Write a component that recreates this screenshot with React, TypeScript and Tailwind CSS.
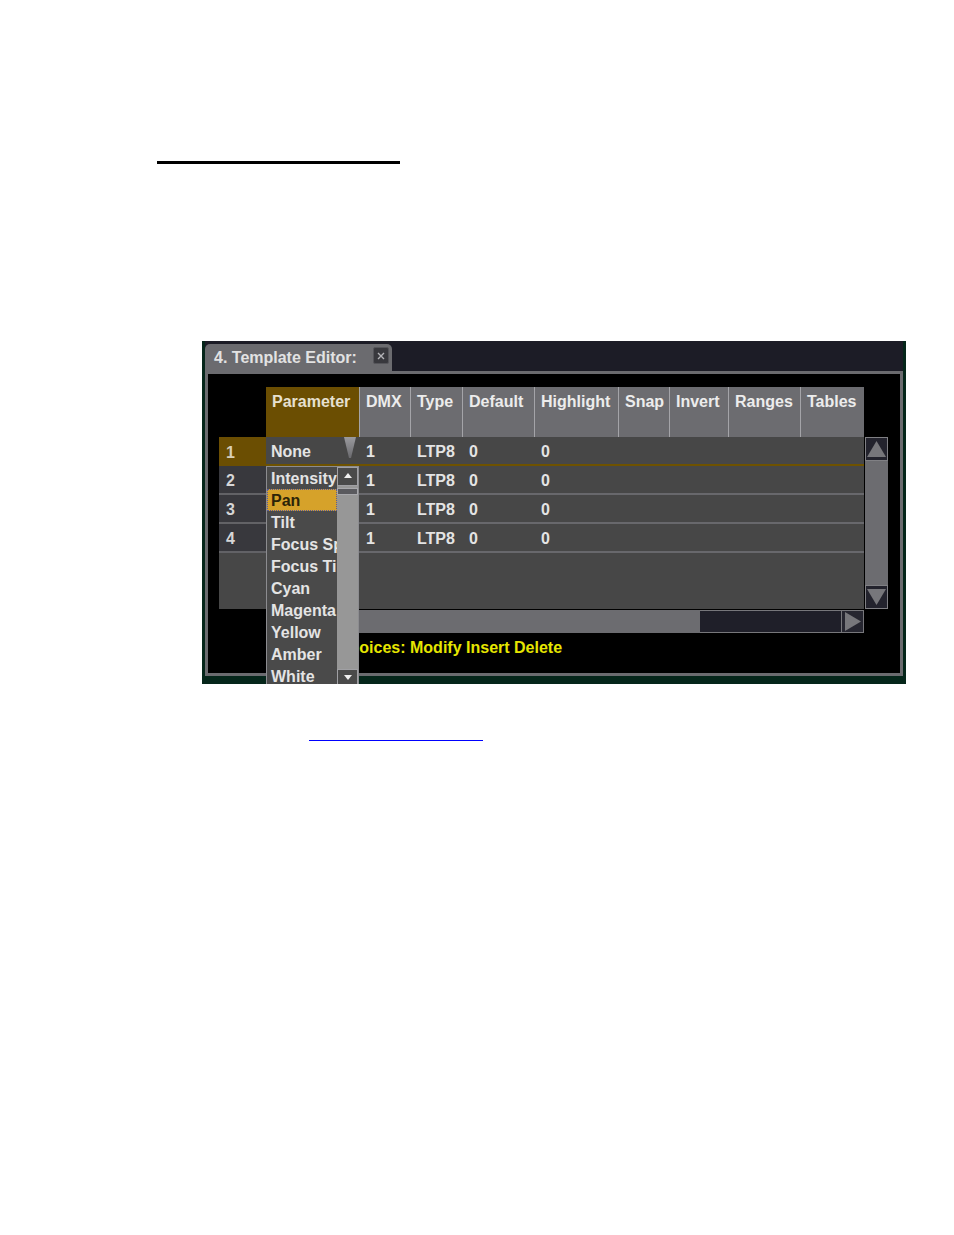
import React from "react";

const headers: { label: string; w: string; brown?: boolean }[] = [
  { label: "Parameter", w: "w-[93px]", brown: true },
  { label: "DMX", w: "w-[51px]" },
  { label: "Type", w: "w-[52px]" },
  { label: "Default", w: "w-[72px]" },
  { label: "Highlight", w: "w-[84px]" },
  { label: "Snap", w: "w-[51px]" },
  { label: "Invert", w: "w-[59px]" },
  { label: "Ranges", w: "w-[72px]" },
  { label: "Tables", w: "w-[64px]" },
];

const items = [
  "Intensity",
  "Pan",
  "Tilt",
  "Focus Speed",
  "Focus Time",
  "Cyan",
  "Magenta",
  "Yellow",
  "Amber",
  "White",
];

function Row({ n, first }: { n: number; first?: boolean }) {
  return (
    <div className="flex h-[29px]">
      <div
        className={
          first
            ? "w-[47px] h-[29px] bg-[#6b4e02] pl-[7px] pt-[1px] flex items-center text-[#d8cfb8]"
            : "w-[47px] h-[29px] bg-[#38383d] border-b-2 border-[#626266] pl-[7px] pt-[1px] flex items-center text-[#d6d6d6]"
        }
      >
        {n}
      </div>
      <div
        className={
          first
            ? "flex-1 h-[29px] flex border-b-2 border-[#6e5200] text-[#e4e4e4]"
            : "flex-1 h-[29px] flex border-b-2 border-[#68686c] text-[#e4e4e4]"
        }
      >
        <div className="w-[93px] pl-[5px] pt-[1px] flex items-center relative">
          {first ? "None" : ""}
          {first && (
            <svg className="absolute left-[78px] top-0" width="12" height="22" viewBox="0 0 12 22">
              <defs>
                <linearGradient id="ddg" x1="0" y1="0" x2="0" y2="1">
                  <stop offset="0" stopColor="#9a9a9e" />
                  <stop offset="1" stopColor="#6a6a6e" />
                </linearGradient>
              </defs>
              <polygon points="0,0 12,0 7,21 5,21" fill="url(#ddg)" />
            </svg>
          )}
        </div>
        <div className="w-[51px] pl-[7px] pt-[1px] flex items-center">1</div>
        <div className="w-[52px] pl-[7px] pt-[1px] flex items-center">LTP8</div>
        <div className="w-[72px] pl-[7px] pt-[1px] flex items-center">0</div>
        <div className="w-[84px] pl-[7px] pt-[1px] flex items-center">0</div>
      </div>
    </div>
  );
}

export default function App() {
  return (
    <div className="w-[954px] h-[1235px] bg-white overflow-hidden flex flex-col items-start font-['Liberation_Sans',Arial,sans-serif]">
      <div className="ml-[157px] mt-[161px] w-[243px] h-[3px] bg-black" />

      <div className="ml-[202px] mt-[177px] w-[704px] h-[343px] bg-[#05261a] px-[3px] pb-[8px] flex flex-col overflow-hidden">
        {/* title bar */}
        <div className="h-[30px] shrink-0 bg-[#1c1c26] pt-[3px] flex">
          <div className="w-[187px] h-[27px] rounded-t-[5px] bg-[#6b6b6f] flex items-center pl-[9px] pr-[3px]">
            <span className="text-[16px] font-bold text-[#e2e2e2] leading-[19px] whitespace-nowrap">
              4. Template Editor:
            </span>
            <div className="ml-auto self-start mt-[3px] w-[16px] h-[17px] bg-[#38383d] border border-[#55555a] rounded-[2px] flex items-center justify-center">
              <svg width="8" height="8" viewBox="0 0 8 8">
                <path d="M1 1 L7 7 M7 1 L1 7" stroke="#b4b4b8" strokeWidth="1.4" />
              </svg>
            </div>
          </div>
        </div>

        {/* panel */}
        <div className="flex-1 border-[3px] border-[#6b6b6f] bg-black pt-[13px] pl-[11px] flex flex-col text-[16px] font-bold leading-[19px]">
          {/* header */}
          <div className="ml-[47px] h-[50px] flex">
            {headers.map((h) => (
              <div
                key={h.label}
                className={
                  h.brown
                    ? `${h.w} h-[50px] bg-[#6b4e02] pl-[6px] pt-[5px] text-[#e6e0d0] whitespace-nowrap`
                    : `${h.w} h-[50px] bg-[#6c6c70] border-l border-[#a4a4a8] pl-[6px] pt-[5px] text-[#ececec] whitespace-nowrap`
                }
              >
                {h.label}
              </div>
            ))}
          </div>

          {/* body */}
          <div className="flex relative">
            <div className="w-[645px] h-[172px] bg-[#474747]">
              <Row n={1} first />
              <Row n={2} />
              <Row n={3} />
              <Row n={4} />
            </div>
            <div className="ml-[1px] w-[23px] h-[172px] bg-[#6c6c70] flex flex-col justify-between">
              <div className="h-[24px] bg-[#23232d] border border-[#808084] flex items-center justify-center">
                <svg width="19" height="18" viewBox="0 0 19 18">
                  <polygon points="9.5,1 19,17 0,17" fill="#77777b" />
                </svg>
              </div>
              <div className="h-[24px] bg-[#23232d] border border-[#808084] flex items-center justify-center">
                <svg width="19" height="18" viewBox="0 0 19 18">
                  <polygon points="0,1 19,1 9.5,17" fill="#77777b" />
                </svg>
              </div>
            </div>

            {/* dropdown list */}
            <div className="absolute left-[47px] top-[29px] z-10 w-[93px] h-[222px] bg-[#4a4a4a] border border-[#8c8c90] flex">
              <div className="w-[70px] flex flex-col overflow-hidden">
                {items.map((it) => (
                  <div
                    key={it}
                    className={
                      it === "Pan"
                        ? "h-[22px] shrink-0 pl-[4px] flex items-center bg-[#d6a22a] text-[#2c2408] outline outline-1 outline-dotted outline-[#5a5a9a] -outline-offset-1 whitespace-nowrap overflow-hidden"
                        : "h-[22px] shrink-0 pl-[4px] flex items-center text-[#e4e4e4] whitespace-nowrap overflow-hidden"
                    }
                  >
                    {it}
                  </div>
                ))}
              </div>
              <div className="w-[21px] flex flex-col bg-[#979797]">
                <div className="h-[19px] shrink-0 bg-[#4a4a4a] border border-[#a0a0a4] flex items-start justify-center pt-[5px]">
                  <svg width="8" height="5" viewBox="0 0 8 5">
                    <polygon points="4,0 8,5 0,5" fill="#f0f0f0" />
                  </svg>
                </div>
                <div className="mt-[2px] h-[7px] shrink-0 bg-[#5a5a5e] border border-[#a8a8ac]" />
                <div className="flex-1" />
                <div className="h-[18px] shrink-0 bg-[#4a4a4a] border border-[#a0a0a4] flex items-start justify-center pt-[5px]">
                  <svg width="8" height="5" viewBox="0 0 8 5">
                    <polygon points="0,0 8,0 4,5" fill="#f0f0f0" />
                  </svg>
                </div>
              </div>
            </div>
          </div>

          {/* horizontal scrollbar */}
          <div className="ml-[47px] mt-[1px] w-[598px] h-[23px] flex">
            <div className="w-[434px] h-[23px] bg-[#6c6c70]" />
            <div className="w-[141px] h-[23px] bg-[#1f1f29] border-y border-[#77777b]" />
            <div className="w-[23px] h-[23px] bg-[#262630] border border-[#77777b] flex items-center justify-center">
              <svg width="18" height="19" viewBox="0 0 18 19">
                <polygon points="1,0 17,9.5 1,19" fill="#77777b" />
              </svg>
            </div>
          </div>

          {/* status */}
          <div className="ml-[119px] mt-[5px] text-[#e6e600] whitespace-nowrap">
            Choices: Modify Insert Delete
          </div>
        </div>
      </div>

      <div className="ml-[309px] mt-[56px] w-[174px] h-px bg-[#0000ff]" />
    </div>
  );
}
